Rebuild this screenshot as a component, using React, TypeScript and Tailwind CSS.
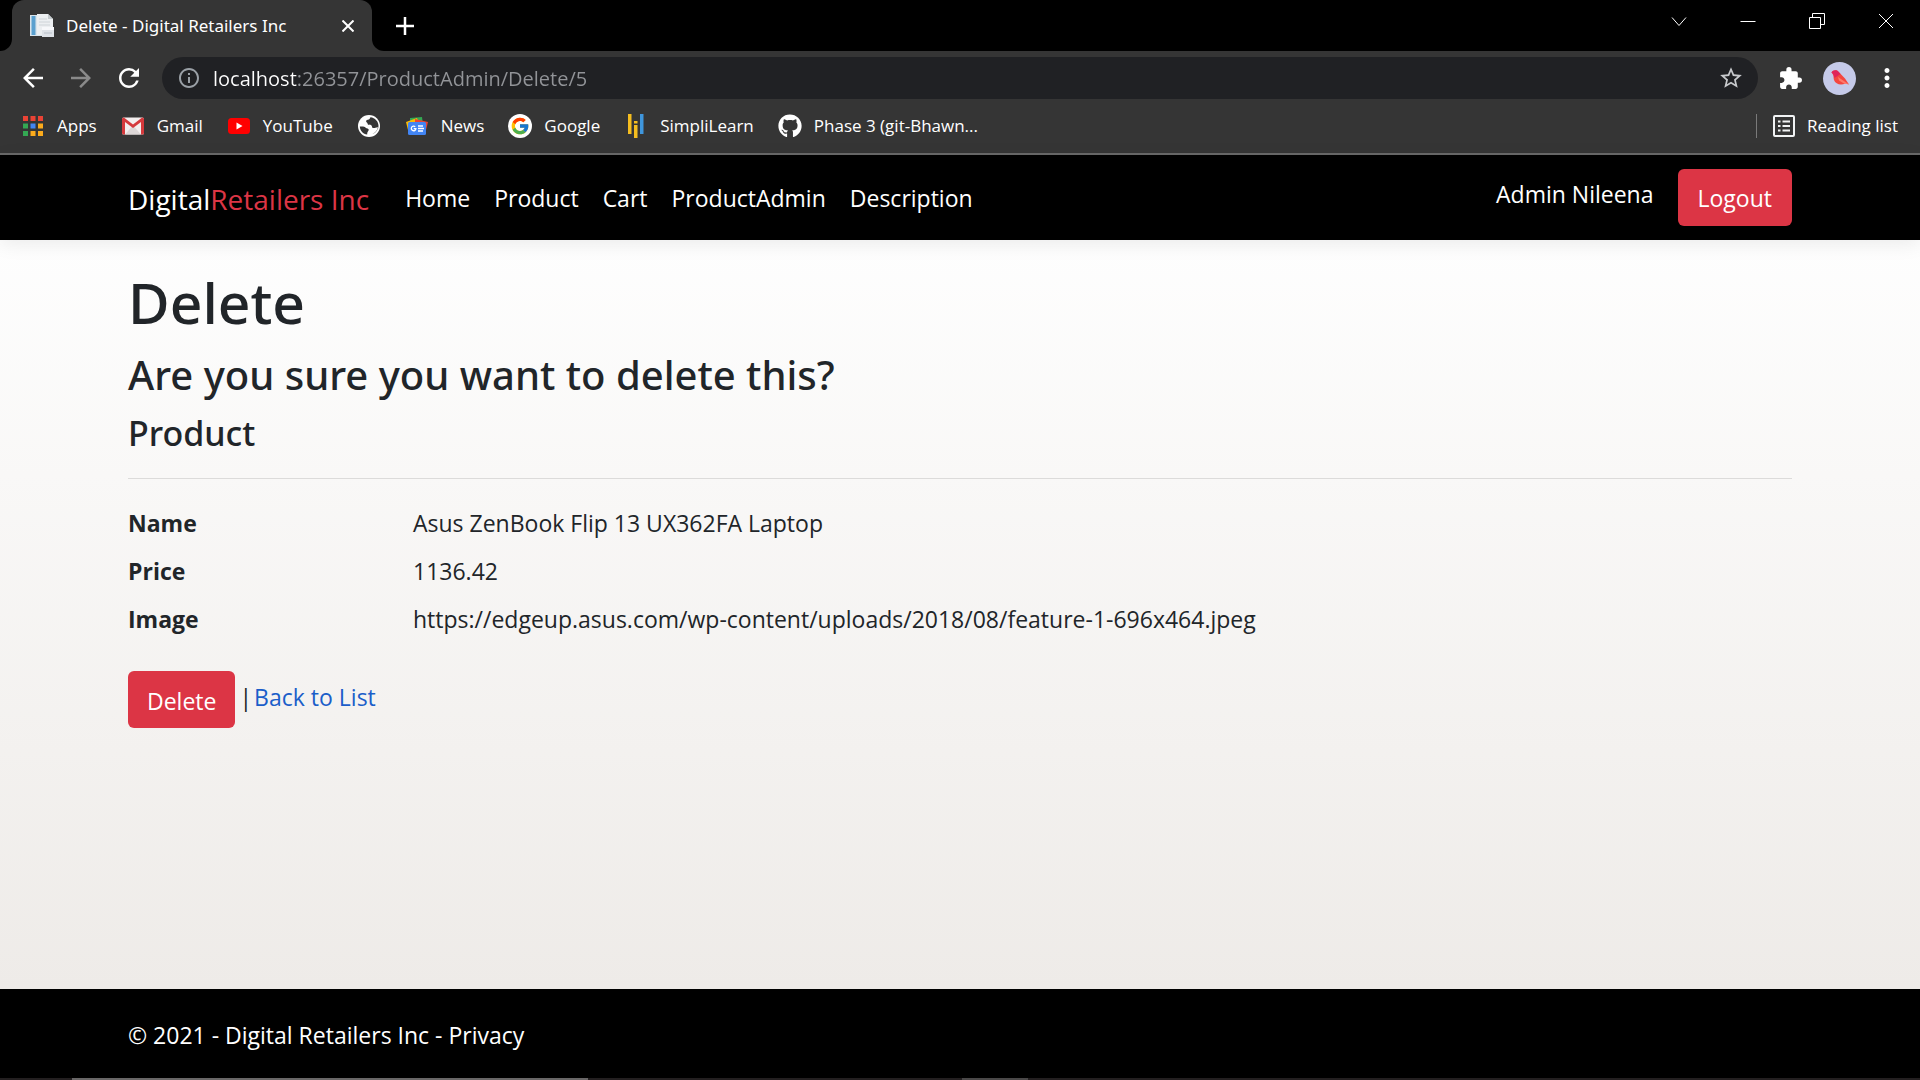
import type { ReactNode } from "react";
import { FcGoogle } from "react-icons/fc";
import { FaGithub } from "react-icons/fa";
import { MdArrowBack, MdArrowForward, MdRefresh, MdInfoOutline, MdStarBorder, MdExtension, MdMoreVert } from "react-icons/md";

function PageIcon() {
  return (
    <svg viewBox="0 0 24 24" className="size-6 shrink-0" aria-hidden="true">
      <path d="M0 1h15v21H0z" fill="#d9e4ec" />
      <path d="M1.500 2h4v19h-4z" fill="#5aa0cf" />
      <path d="M7 0h11l5 5v16H7z" fill="#eceff1" />
      <path d="M18 0v5h5z" fill="#c3c9cd" />
      <path d="M9 5h8M9 8h11M9 11h11" stroke="#cfd4d8" strokeWidth="1" />
      <path d="M12 13h12v10H12z" fill="#dfe3e8" />
      <path d="M12 13h12v3H12z" fill="#f7f8fa" />
      <path d="M14 19h8" stroke="#b9c0c8" />
    </svg>
  );
}

function AppsIcon() {
  const colors = ["#ea4335", "#ea4335", "#ea4335", "#34a853", "#4285f4", "#fbab1c", "#34a853", "#fbab1c", "#fbab1c"];
  return (
    <svg viewBox="0 0 20 20" className="mr-0.5 size-5" aria-hidden="true">
      {colors.map((c, i) => (
        <rect key={i} x={(i % 3) * 7.5} y={Math.floor(i / 3) * 7.5} width="5" height="5" fill={c} />
      ))}
    </svg>
  );
}

function GmailIcon() {
  return (
    <svg viewBox="0 0 24 24" className="size-6" aria-hidden="true">
      <rect x="1" y="3.5" width="22" height="17" rx="1.5" fill="#f3eeee" />
      <path d="M4 20.500 10.500 13h3L20 20.500z" fill="#dcd6d6" />
      <path d="M1 5v14a1.500 1.500 0 0 0 1.500 1.500H4V8l8 6 8-6v12.500h1.500A1.500 1.500 0 0 0 23 19V5a1.500 1.500 0 0 0-2.500-1.100L12 10.500 3.500 3.900A1.500 1.500 0 0 0 1 5z" fill="#d5393c" />
    </svg>
  );
}

function YouTubeIcon() {
  return (
    <svg viewBox="0 0 24 24" className="size-6" aria-hidden="true">
      <rect x="1" y="4" width="22" height="16" rx="3.500" fill="#f00" />
      <path d="M9.500 8.500v7l6-3.500z" fill="#fff" />
    </svg>
  );
}

function GlobeIcon() {
  return (
    <svg viewBox="0 0 24 24" className="size-6" aria-hidden="true">
      <circle cx="12" cy="12" r="11" fill="#fff" />
      <path d="M2.800 12.500c3 0 4.700-.2 5.700 1 1 1.300 3.200.6 3.200 2.300 0 1.500-1.500 1.500-1.500 4.800-4-.4-7.200-3.800-7.400-8.100zM13.500 3.200c-1 .8-.2 1.800-1.700 2.300-1.300.4-2.700.3-2.700 1.800 0 1.300 1.500 1.200 1.500 2.400 0 1.500 2.600.5 3.900 1.700.8.800.3 2.200 1.500 2.600 1.700.5 2.900-.9 5-.7-.7 3-2.600 5.400-5.500 6.700 3.600-1.500 6-4.600 6-8.300 0-4.200-3.500-7.900-8-8.500z" fill="#353535" />
    </svg>
  );
}

function NewsIcon() {
  return (
    <svg viewBox="0 0 24 24" className="size-6" aria-hidden="true">
      <path d="M5 4l12-1 1 8H5z" fill="#34a853" />
      <path d="M1 8l11-4 3 8-12 4z" fill="#fbbc04" />
      <path d="M10 5l13 3-2 8-11-3z" fill="#ea4335" />
      <rect x="3" y="8" width="18" height="13" rx="1.500" fill="#4285f4" />
      <path d="M10.200 12.800A2.300 2.300 0 1 0 10.900 14.600H8.700" fill="none" stroke="#fff" strokeWidth="1.300" />
      <path d="M13 12h5M13 14.500h6M13 17h5" stroke="#fff" strokeWidth="1.300" />
    </svg>
  );
}

function GoogleIcon() {
  return (
    <span className="flex size-6 items-center justify-center rounded-full bg-white">
      <FcGoogle className="size-5" />
    </span>
  );
}

function SimpliIcon() {
  return (
    <svg viewBox="0 0 24 24" className="size-6" aria-hidden="true">
      <path d="M4 0h3.500v20H4zM10 11h3.500v13H10zM10 7h3.500v2.500H10z" fill="#f5bd1f" />
      <path d="M16 0h3.500v20H16z" fill="#3f96dc" />
    </svg>
  );
}

function ReadingListIcon() {
  return (
    <svg viewBox="0 0 22 22" className="size-[22px]" fill="none" stroke="#f1f3f4" strokeWidth="2" aria-hidden="true">
      <rect x="1" y="1" width="20" height="20" rx="1" />
      <path d="M5 6.500h2.500M9.500 6.500H17M5 11h2.500M9.500 11H17M5 15.500h2.500M9.500 15.500H17" />
    </svg>
  );
}

function BirdIcon() {
  return (
    <svg viewBox="0 0 33 33" className="size-[33px]" aria-hidden="true">
      <circle cx="16.500" cy="16.500" r="16.500" fill="#c5cae9" />
      <path d="M8.500 10.500C10 8 13.500 7.600 15.500 9.800l6.500 6.700 4 6-3.500-1.300c-4 2.500-10 1.300-11.500-3.200-.7-2.500.2-4.600-2.500-7.500z" fill="#f4473f" />
      <path d="M8.500 10.500C10 8 13.500 7.600 15.500 9.800l2 2.200-6 4c-.7-2.500-.3-3-3-5.500z" fill="#e0245a" />
      <path d="M15 15l11 7.500-5-1-5-3z" fill="#ff7a6b" />
    </svg>
  );
}

function Bookmark({ icon, label, title }: { icon: ReactNode; label?: string; title?: string }) {
  return (
    <a href="#" aria-label={title} className="flex shrink-0 items-center gap-3">
      {icon}
      {label && <span>{label}</span>}
    </a>
  );
}

function WindowButton({ label, d }: { label: string; d: string }) {
  return (
    <button type="button" aria-label={label} className="flex h-[42px] w-[69px] items-center justify-center">
      <svg viewBox="0 0 16 16" className="size-4" fill="none" stroke="#fff" strokeWidth="1" aria-hidden="true">
        <path d={d} />
      </svg>
    </button>
  );
}

function BrowserChrome() {
  return (
    <header className="border-b-2 border-[#696969] bg-[#353535] text-white">
      <div className="flex h-[51px] justify-between bg-black">
        <div className="flex">
          <div className="flex w-3 items-end bg-black">
            <div className="size-3 bg-[#353535]">
              <div className="size-3 rounded-br-xl bg-black" />
            </div>
          </div>
          <div className="flex w-[360px] items-center rounded-t-xl bg-[#353535] pr-3 pl-[18px]">
            <PageIcon />
            <span className="ml-3 flex-1 font-['Noto_Sans',sans-serif] text-[17px] whitespace-nowrap">Delete - Digital Retailers Inc</span>
            <button type="button" aria-label="Close tab" className="flex size-6 items-center justify-center">
              <svg viewBox="0 0 12 12" className="size-3" stroke="#fff" strokeWidth="2" aria-hidden="true">
                <path d="M0.500 0.500l11 11M11.500 0.500l-11 11" />
              </svg>
            </button>
          </div>
          <div className="flex w-3 items-end bg-black">
            <div className="size-3 bg-[#353535]">
              <div className="size-3 rounded-bl-xl bg-black" />
            </div>
          </div>
          <button type="button" aria-label="New tab" className="flex w-[42px] items-center justify-center">
            <svg viewBox="0 0 18 18" className="size-[18px]" stroke="#fff" strokeWidth="2.500" aria-hidden="true">
              <path d="M9 0v18M0 9h18" />
            </svg>
          </button>
        </div>
        <div className="flex">
          <WindowButton label="Search tabs" d="M1 4.500l7 8 7-8" />
          <WindowButton label="Minimize" d="M0.500 8.500h15" />
          <WindowButton label="Restore" d="M0.500 4.500h11v11h-11zM3.500 4.500v-4h12v11h-4" />
          <WindowButton label="Close" d="M1 1l14 14M15 1l-14 14" />
        </div>
      </div>

      <div className="flex h-[54px] items-center px-[18px]">
        <div className="flex gap-[18px]">
          <button type="button" aria-label="Back"><MdArrowBack className="size-[30px]" /></button>
          <button type="button" aria-label="Forward"><MdArrowForward className="size-[30px] text-[#8a8a8a]" /></button>
          <button type="button" aria-label="Reload"><MdRefresh className="size-[30px]" /></button>
        </div>
        <div className="ml-[18px] flex h-[42px] flex-1 items-center rounded-full bg-[#202124] pr-[14px] pl-[15px]">
          <MdInfoOutline className="size-6 shrink-0 text-[#9aa0a6]" />
          <input
            type="text"
            aria-label="Address"
            defaultValue="localhost:26357/ProductAdmin/Delete/5"
            className="ml-3 h-8 min-w-0 flex-1 bg-[linear-gradient(90deg,#fff_84px,#929498_84px)] bg-clip-text text-xl text-transparent outline-none"
          />
          <button type="button" aria-label="Bookmark this tab"><MdStarBorder className="size-[26px] text-[#c8cacd]" /></button>
        </div>
        <button type="button" aria-label="Extensions" className="ml-5"><MdExtension className="size-[25px]" /></button>
        <button type="button" aria-label="Profile" className="ml-5"><BirdIcon /></button>
        <button type="button" aria-label="Menu" className="ml-4"><MdMoreVert className="size-[30px]" /></button>
      </div>

      <div className="flex h-12 items-center justify-between pr-[22px] pl-[23px] pb-1.5 text-[17px] whitespace-nowrap">
        <nav aria-label="Bookmarks" className="flex items-center gap-6">
          <Bookmark icon={<AppsIcon />} label="Apps" />
          <Bookmark icon={<GmailIcon />} label="Gmail" />
          <Bookmark icon={<YouTubeIcon />} label="YouTube" />
          <Bookmark icon={<GlobeIcon />} title="Web page" />
          <Bookmark icon={<NewsIcon />} label="News" />
          <Bookmark icon={<GoogleIcon />} label="Google" />
          <Bookmark icon={<SimpliIcon />} label="SimpliLearn" />
          <Bookmark icon={<FaGithub className="size-6" />} label="Phase 3 (git-Bhawn..." />
        </nav>
        <button type="button" className="flex items-center gap-3">
          <span className="mr-1 h-6 w-px bg-[#7a7a7a]" />
          <ReadingListIcon />
          Reading list
        </button>
      </div>
    </header>
  );
}

const links = ["Home", "Product", "Cart", "ProductAdmin", "Description"];

const details = [
  ["Name", "Asus ZenBook Flip 13 UX362FA Laptop"],
  ["Price", "1136.42"],
  ["Image", "https://edgeup.asus.com/wp-content/uploads/2018/08/feature-1-696x464.jpeg"],
];

export default function App() {
  return (
    <div className="flex min-h-screen flex-col font-['Open_Sans','Noto_Sans',sans-serif]">
      <BrowserChrome />

      <div className="z-10 flex h-[85px] items-center justify-between bg-black px-32 text-white shadow-[0_4px_18px_rgba(0,0,0,0.08)]">
        <nav aria-label="Main" className="flex items-center gap-6 pt-0.5 text-[23px]">
          <a href="#" className="mr-3 text-[28px]">
            Digital<span className="text-[#dc3545]">Retailers Inc</span>
          </a>
          {links.map((l) => (
            <a key={l} href="#">{l}</a>
          ))}
        </nav>
        <div className="flex items-center gap-6 text-[23px]">
          <span className="pb-1.5">Admin Nileena</span>
          <button type="button" className="h-[57px] rounded-md bg-[#dc3545] px-5 pt-0.5">Logout</button>
        </div>
      </div>

      <main className="flex-1 bg-linear-to-b from-[#fefefe] to-[#eeebe8] px-32 pt-[26px] text-[#212529]">
        <div className="font-['Noto_Sans',sans-serif] font-medium">
          <h1 className="text-[57px] leading-[72px]">Delete</h1>
          <h3 className="mt-3 text-[40px] leading-[50px]">Are you sure you want to delete this?</h3>
          <h4 className="mt-3 text-[34px] leading-[43px]">Product</h4>
        </div>
        <hr className="mt-[23px] border-[#dcdbda]" />
        <dl className="mt-[26px] grid grid-cols-[285px_1fr] gap-y-3 text-[23px] leading-9">
          {details.map(([k, v]) => (
            <div key={k} className="contents">
              <dt className="font-bold">{k}</dt>
              <dd>{v}</dd>
            </div>
          ))}
        </dl>
        <form className="mt-[34px] flex items-center text-[23px]" onSubmit={(e) => e.preventDefault()}>
          <button type="submit" className="h-[57px] rounded-md bg-[#dc3545] px-[19px] pt-1 text-white">Delete</button>
          <span className="ml-1 pb-1">|</span>
          <a href="#" className="ml-0.5 pb-1 text-[#1b5ec9]">Back to List</a>
        </form>
      </main>

      <footer className="flex h-[89px] items-center bg-black px-32 pt-1 text-[23px] text-white">
        <p>© 2021 - Digital Retailers Inc - <a href="#">Privacy</a></p>
      </footer>
      <div className="flex h-0.5 bg-[#231f20]">
        <div className="ml-[72px] w-[516px] bg-[#696767]" />
        <div className="ml-[374px] w-[66px] bg-[#4a4848]" />
      </div>
    </div>
  );
}
